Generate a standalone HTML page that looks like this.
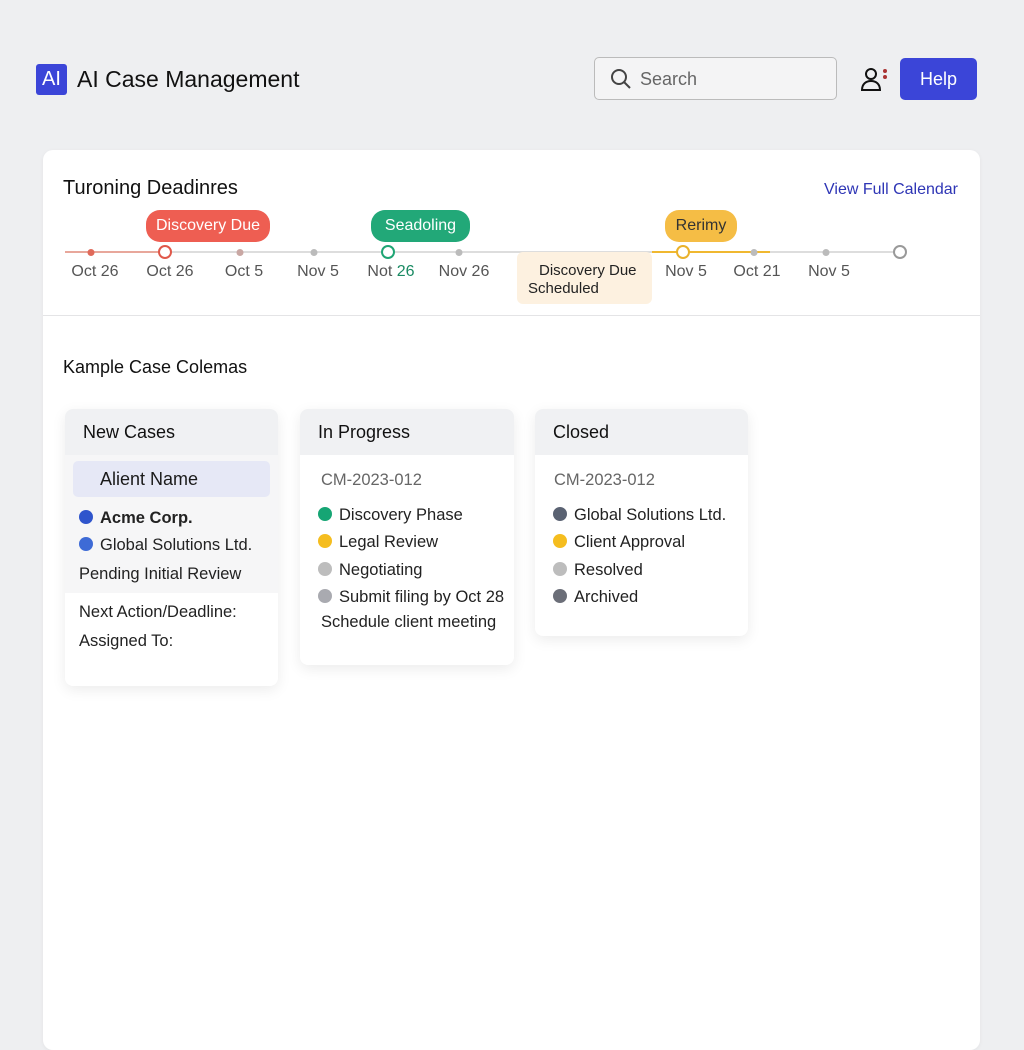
<!DOCTYPE html>
<html><head><style>
*{margin:0;padding:0;box-sizing:border-box}
body{width:1024px;height:1024px;background:#eeeff1;font-family:"Liberation Sans",sans-serif;position:relative;overflow:hidden;color:#1a1a1a}
.a{position:absolute}
.lbl{position:absolute;top:263px;font-size:16px;color:#555;transform:translateX(-50%);white-space:nowrap}
.dot{position:absolute;width:7px;height:7px;border-radius:50%;background:#bbb;top:249px;transform:translateX(-50%)}
.ring{position:absolute;width:14px;height:14px;border-radius:50%;background:#fff;border:2.5px solid #999;top:245px;transform:translateX(-50%)}
.pill{position:absolute;top:210px;height:32px;border-radius:14px;color:#fff;font-size:16px;text-align:center;line-height:32px}
.col{position:absolute;top:409px;background:#fff;border-radius:8px;box-shadow:0 4px 14px rgba(0,0,0,.08);overflow:hidden}
.hd{height:46px;background:#f0f1f3;font-size:18px;font-weight:500;line-height:46px;padding-left:18px;color:#111}
.it{position:absolute;font-size:16.5px;color:#222;white-space:nowrap}
.b{display:inline-block;width:14px;height:14px;border-radius:50%;vertical-align:-1px;margin-right:7px}
</style></head><body>
<div class="a" style="left:36px;top:64px;width:31px;height:31px;background:#3b45d8;border-radius:3px;color:#fff;font-size:20px;line-height:31px;text-align:center">AI</div>
<div class="a" style="left:77px;top:66px;font-size:23px;color:#111">AI Case Management</div>
<div class="a" style="left:594px;top:57px;width:243px;height:43px;border:1.5px solid #bbb;border-radius:5px;background:#f4f4f5"></div>
<svg class="a" style="left:610px;top:68px" width="22" height="22" viewBox="0 0 22 22"><circle cx="9" cy="9" r="7" fill="none" stroke="#444" stroke-width="2"/><path d="M14 14l6 6" stroke="#444" stroke-width="2"/></svg>
<div class="a" style="left:640px;top:69px;font-size:18px;color:#666">Search</div>
<svg class="a" style="left:860px;top:66px" width="30" height="28" viewBox="0 0 30 28"><circle cx="11" cy="8" r="5" fill="none" stroke="#111" stroke-width="2"/><path d="M2 24c0-6 4-9 9-9s9 3 9 9z" fill="none" stroke="#111" stroke-width="2"/><circle cx="25" cy="5" r="2" fill="#a33"/><circle cx="25" cy="11" r="2" fill="#a33"/></svg>
<div class="a" style="left:900px;top:58px;width:77px;height:42px;background:#3b45d8;border-radius:5px;color:#fff;font-size:18px;line-height:42px;text-align:center">Help</div>

<div class="a" style="left:43px;top:150px;width:937px;height:900px;background:#fff;border-radius:10px;box-shadow:0 1px 4px rgba(0,0,0,.05)"></div>
<div class="a" style="left:43px;top:315px;width:937px;height:1px;background:#e4e4e6"></div>
<div class="a" style="left:63px;top:177px;font-size:20px;color:#111">Turoning Deadinres</div>
<div class="a" style="left:824px;top:181px;font-size:16px;color:#2e35b5">View Full Calendar</div>

<div class="a" style="left:65px;top:251px;width:835px;height:2px;background:#ddd"></div>
<div class="a" style="left:65px;top:251px;width:100px;height:2px;background:#e8a79b"></div>
<div class="a" style="left:652px;top:251px;width:118px;height:2px;background:#f0b830"></div>
<div class="dot" style="left:91px;background:#e06a5a"></div>
<div class="dot" style="left:240px;background:#c9a7a3"></div>
<div class="dot" style="left:314px"></div>
<div class="dot" style="left:459px"></div>
<div class="dot" style="left:754px"></div>
<div class="dot" style="left:826px"></div>
<div class="ring" style="left:165px;border-color:#e0584a"></div>
<div class="ring" style="left:388px;border-color:#1fa574"></div>
<div class="ring" style="left:683px;border-color:#eab22c"></div>
<div class="ring" style="left:900px;border-color:#999"></div>
<div class="pill" style="left:146px;width:124px;background:#ee5e52">Discovery Due</div>
<div class="pill" style="left:371px;width:99px;background:#22a878">Seadoling</div>
<div class="pill" style="left:665px;width:72px;background:#f5bd45;color:#333">Rerimy</div>
<div class="lbl" style="left:95px">Oct 26</div>
<div class="lbl" style="left:170px">Oct 26</div>
<div class="lbl" style="left:244px">Oct 5</div>
<div class="lbl" style="left:318px">Nov 5</div>
<div class="lbl" style="left:391px">Not <span style="color:#1a8a63">26</span></div>
<div class="lbl" style="left:464px">Nov 26</div>
<div class="lbl" style="left:686px">Nov 5</div>
<div class="lbl" style="left:757px">Oct 21</div>
<div class="lbl" style="left:829px">Nov 5</div>
<div class="a" style="left:517px;top:252px;width:135px;height:52px;background:#fdf1e0;border-radius:6px;font-size:15px;color:#222">
<div style="position:absolute;left:22px;top:10px">Discovery Due</div><div style="position:absolute;left:11px;top:28px">Scheduled</div></div>

<div class="a" style="left:63px;top:357px;font-size:18px;color:#111">Kample Case Colemas</div>

<div class="col" style="left:65px;width:213px;height:277px"><div class="hd">New Cases</div>
<div style="position:absolute;left:0;top:46px;width:213px;height:138px;background:#f6f6f7"></div>
<div style="position:absolute;left:8px;top:52px;width:197px;height:36px;background:#e6e8f6;border-radius:5px;font-size:18px;font-weight:500;line-height:36px;padding-left:27px">Alient Name</div>
<div class="it" style="left:14px;top:100px;font-weight:bold"><span class="b" style="background:#2f55cc"></span>Acme Corp.</div>
<div class="it" style="left:14px;top:127px"><span class="b" style="background:#3e6bd6"></span>Global Solutions Ltd.</div>
<div class="it" style="left:14px;top:156px">Pending Initial Review</div>
<div class="it" style="left:14px;top:194px">Next Action/Deadline:</div>
<div class="it" style="left:14px;top:223px">Assigned To:</div>
</div>
<div class="col" style="left:300px;width:214px;height:256px"><div class="hd">In Progress</div>
<div class="it" style="left:21px;top:62px;color:#666">CM-2023-012</div>
<div class="it" style="left:18px;top:97px"><span class="b" style="background:#16a574"></span>Discovery Phase</div>
<div class="it" style="left:18px;top:124px"><span class="b" style="background:#f5bd1f"></span>Legal Review</div>
<div class="it" style="left:18px;top:152px"><span class="b" style="background:#bdbdbd"></span>Negotiating</div>
<div class="it" style="left:18px;top:179px"><span class="b" style="background:#a9aab0"></span>Submit filing by Oct 28</div>
<div class="it" style="left:21px;top:204px">Schedule client meeting</div>
</div>
<div class="col" style="left:535px;width:213px;height:227px"><div class="hd">Closed</div>
<div class="it" style="left:19px;top:62px;color:#666">CM-2023-012</div>
<div class="it" style="left:18px;top:97px"><span class="b" style="background:#5a6272"></span>Global Solutions Ltd.</div>
<div class="it" style="left:18px;top:124px"><span class="b" style="background:#f5bd1f"></span>Client Approval</div>
<div class="it" style="left:18px;top:152px"><span class="b" style="background:#bdbdbd"></span>Resolved</div>
<div class="it" style="left:18px;top:179px"><span class="b" style="background:#6b6e78"></span>Archived</div>
</div>
</body></html>
